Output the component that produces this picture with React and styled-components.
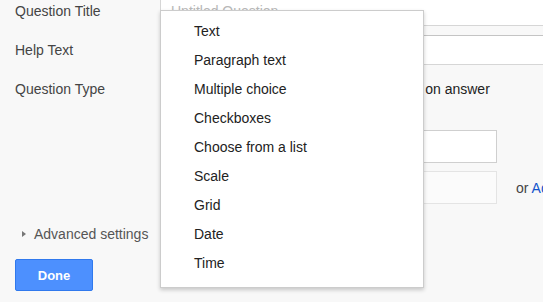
import React from 'react';
import styled, { createGlobalStyle } from 'styled-components';

const GlobalStyle = createGlobalStyle`
  html, body {
    margin: 0;
    padding: 0;
    background: #f8f8f8;
    overflow: hidden;
  }
  body {
    font-family: "Liberation Sans", Arial, sans-serif;
  }
`

const Page = styled.div`
  position: relative;
  display: flow-root;
  width: 543px;
  height: 302px;
  overflow: hidden;
  box-sizing: border-box;
  padding-left: 15px;
  font-size: 14px;
  color: #444;
`
const Form = styled.div`
  display: flex;
  flex-direction: column;
  margin-top: -4px;
`
const Row = styled.div`
  display: grid;
  grid-template-columns: 145px 1fr;
  align-items: center;
  height: 30px;
  margin-bottom: 9px;
`
const Label = styled.div`
  color: #444;
  white-space: nowrap;
`
const TextInput = styled.div`
  box-sizing: border-box;
  width: 420px;
  height: 30px;
  padding-left: 10px;
  line-height: 28px;
  background: #fff;
  border: 1px solid #d6d6d6;
  border-top-color: #c4c4c4;
  color: #b8b8b8;
`
const TypeLine = styled.div`
  display: flex;
  align-items: center;
  white-space: nowrap;
  color: #222;
`
const Select = styled.div`
  box-sizing: border-box;
  width: 117px;
  height: 28px;
  border: 1px solid #ccc;
  background: #f4f4f4;
  margin-right: 12px;
`
const Check = styled.span`
  display: inline-block;
  width: 13px;
  height: 13px;
  border: 1px solid #aaa;
  background: #fff;
  margin-right: 6px;
`
const Options = styled.div`
  display: flex;
  flex-direction: column;
  gap: 8px;
  margin-top: 17px;
  padding-left: 175px;
`
const OptionRow = styled.div`
  display: flex;
  align-items: center;
  height: 33px;
`
const OptionInput = styled.div`
  flex-shrink: 0;
  box-sizing: border-box;
  width: 307px;
  height: 33px;
  background: ${p => (p.$ghost ? '#fbfbfb' : '#fff')};
  border: 1px solid ${p => (p.$ghost ? '#e4e4e4' : '#cfcfcf')};
`
const OrText = styled.span`
  margin-left: 19px;
  color: #444;
  white-space: nowrap;
`
const Link = styled.span`
  color: #1155cc;
`
const Advanced = styled.div`
  display: flex;
  align-items: center;
  gap: 8px;
  height: 20px;
  margin-top: 20px;
  padding-left: 7px;
  color: #555;
  font-size: 14px;
`
const Arrow = styled.span`
  width: 0;
  height: 0;
  border-top: 3.5px solid transparent;
  border-bottom: 3.5px solid transparent;
  border-left: 4px solid #777;
`
const DoneButton = styled.button`
  box-sizing: border-box;
  width: 78px;
  height: 32px;
  margin-top: 15px;
  background: #4d90fe;
  border: 1px solid #3079ed;
  border-radius: 2px;
  color: #fff;
  font-family: inherit;
  font-size: 13px;
  font-weight: bold;
  padding: 0;
`
const Menu = styled.ul`
  position: absolute;
  top: 10px;
  left: 160px;
  box-sizing: border-box;
  width: 264px;
  margin: 0;
  padding: 6px 0 9px;
  list-style: none;
  background: #fff;
  border: 1px solid #ccc;
  box-shadow: 0 2px 4px rgba(0, 0, 0, 0.2);
`
const MenuItem = styled.li`
  height: 29px;
  line-height: 29px;
  padding-left: 33px;
  color: #222;
  font-size: 14px;
`

const types = ['Text', 'Paragraph text', 'Multiple choice', 'Checkboxes', 'Choose from a list', 'Scale', 'Grid', 'Date', 'Time'];

export default function App() {
  return (
    <Page>
      <GlobalStyle />
      <Form>
        <Row>
          <Label>Question Title</Label>
          <TextInput>Untitled Question</TextInput>
        </Row>
        <Row>
          <Label>Help Text</Label>
          <TextInput />
        </Row>
        <Row>
          <Label>Question Type</Label>
          <TypeLine>
            <Select />
            <Check />
            Go to page based on answer
          </TypeLine>
        </Row>
        <Options>
          <OptionRow>
            <OptionInput />
          </OptionRow>
          <OptionRow>
            <OptionInput $ghost />
            <OrText>or <Link>Add "Other"</Link></OrText>
          </OptionRow>
        </Options>
        <Advanced>
          <Arrow />
          Advanced settings
        </Advanced>
        <div>
          <DoneButton>Done</DoneButton>
        </div>
      </Form>
      <Menu>
        {types.map(t => (
          <MenuItem key={t}>{t}</MenuItem>
        ))}
      </Menu>
    </Page>
  );
}
